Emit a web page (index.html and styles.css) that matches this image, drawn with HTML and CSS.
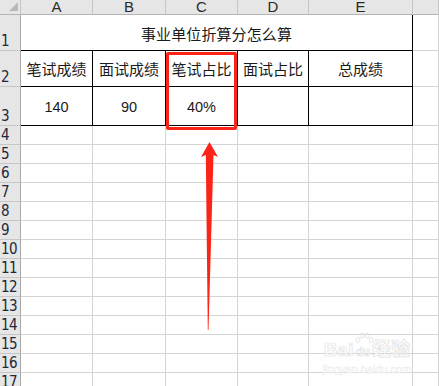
FILE: index.html
```html
<!DOCTYPE html>
<html lang="zh">
<head>
<meta charset="utf-8">
<title>事业单位折算分怎么算</title>
<link rel="stylesheet" href="styles.css">
</head>
<body>
<div class="sheet">
  <div class="corner"><span class="tri"></span></div>
  <div class="ch">A</div><div class="ch">B</div><div class="ch">C</div><div class="ch">D</div><div class="ch">E</div><div class="ch"></div>

  <div class="rh"><span>1</span></div>
  <div class="c b title">事业单位折算分怎么算</div>
  <div class="c"></div>

  <div class="rh"><span>2</span></div>
  <div class="c b txt">笔试成绩</div><div class="c b txt">面试成绩</div><div class="c b txt">笔试占比</div><div class="c b txt">面试占比</div><div class="c b txt">总成绩</div><div class="c"></div>

  <div class="rh"><span>3</span></div>
  <div class="c b num">140</div><div class="c b num">90</div><div class="c b num">40%</div><div class="c b"></div><div class="c b"></div><div class="c"></div>

  <div class="rh"><span>4</span></div><div class="c"></div><div class="c"></div><div class="c"></div><div class="c"></div><div class="c"></div><div class="c"></div>
  <div class="rh"><span>5</span></div><div class="c"></div><div class="c"></div><div class="c"></div><div class="c"></div><div class="c"></div><div class="c"></div>
  <div class="rh"><span>6</span></div><div class="c"></div><div class="c"></div><div class="c"></div><div class="c"></div><div class="c"></div><div class="c"></div>
  <div class="rh"><span>7</span></div><div class="c"></div><div class="c"></div><div class="c"></div><div class="c"></div><div class="c"></div><div class="c"></div>
  <div class="rh"><span>8</span></div><div class="c"></div><div class="c"></div><div class="c"></div><div class="c"></div><div class="c"></div><div class="c"></div>
  <div class="rh"><span>9</span></div><div class="c"></div><div class="c"></div><div class="c"></div><div class="c"></div><div class="c"></div><div class="c"></div>
  <div class="rh"><span>10</span></div><div class="c"></div><div class="c"></div><div class="c"></div><div class="c"></div><div class="c"></div><div class="c"></div>
  <div class="rh"><span>11</span></div><div class="c"></div><div class="c"></div><div class="c"></div><div class="c"></div><div class="c"></div><div class="c"></div>
  <div class="rh"><span>12</span></div><div class="c"></div><div class="c"></div><div class="c"></div><div class="c"></div><div class="c"></div><div class="c"></div>
  <div class="rh"><span>13</span></div><div class="c"></div><div class="c"></div><div class="c"></div><div class="c"></div><div class="c"></div><div class="c"></div>
  <div class="rh"><span>14</span></div><div class="c"></div><div class="c"></div><div class="c"></div><div class="c"></div><div class="c"></div><div class="c"></div>
  <div class="rh"><span>15</span></div><div class="c"></div><div class="c"></div><div class="c"></div><div class="c"></div><div class="c"></div><div class="c"></div>
  <div class="rh"><span>16</span></div><div class="c"></div><div class="c"></div><div class="c"></div><div class="c"></div><div class="c"></div><div class="c"></div>
  <div class="rh"><span>17</span></div><div class="c"></div><div class="c"></div><div class="c"></div><div class="c"></div><div class="c"></div><div class="c"></div>

  <div class="highlight"></div>
  <svg class="arrow" width="439" height="386" viewBox="0 0 439 386">
    <polygon points="209.5,142 218,157 213.5,155 208.5,330 207.8,330 205.8,155 201,157" fill="#fc2318"/>
  </svg>
  <div class="watermark">
    <svg class="wm-paw" width="20" height="14" viewBox="0 0 20 14">
      <g fill="none" stroke="#e4e4e4" stroke-width="1">
        <ellipse cx="4" cy="8" rx="2" ry="2.5"/>
        <ellipse cx="8" cy="3.5" rx="2" ry="2.6"/>
        <ellipse cx="13" cy="3.5" rx="2" ry="2.6"/>
        <ellipse cx="17" cy="8" rx="2" ry="2.5"/>
      </g>
    </svg>
    <div class="wm-main">Bai<span class="paw">du</span>经验</div>
    <div class="wm-url">jingyan.baidu.com</div>
  </div>
</div>
</body>
</html>
```
FILE: styles.css
```css
html, body {
  margin: 0;
  padding: 0;
  background: #ffffff;
  overflow: hidden;
}
.sheet {
  position: relative;
  width: 439px;
  height: 386px;
  overflow: hidden;
  display: grid;
  grid-template-columns: 21px 72px 73px 72px 71px 104px 1fr;
  grid-template-rows: 15px 36px 36px 39px repeat(14, 19px);
  font-family: "Noto Sans CJK SC", "Liberation Sans", sans-serif;
  color: #1a1a1a;
}
.sheet > div {
  box-sizing: border-box;
}
.corner {
  position: relative;
  background: #e6e6e6;
  border-right: 1px solid #c6c6c6;
  border-bottom: 1px solid #b4b4b4;
}
.tri {
  position: absolute;
  right: 2px;
  bottom: 3px;
  width: 0;
  height: 0;
  border-left: 9px solid transparent;
  border-bottom: 9px solid #b9b9b9;
}
.ch {
  background: #e6e6e6;
  border-right: 1px solid #c6c6c6;
  border-bottom: 1px solid #b4b4b4;
  font-family: "Liberation Sans", sans-serif;
  font-size: 15px;
  line-height: 14px;
  text-align: center;
  color: #2a2a2a;
}
.rh {
  background: #e6e6e6;
  border-right: 1px solid #a8a8a8;
  border-bottom: 1px solid #c6c6c6;
  display: flex;
  align-items: flex-end;
  justify-content: flex-start;
  padding-left: 1px;
  padding-bottom: 1px;
}
.rh span {
  font-family: "DejaVu Sans Condensed", "Liberation Sans", sans-serif;
  font-size: 15px;
  line-height: 16px;
  color: #22283a;
  white-space: nowrap;
  letter-spacing: -0.5px;
}
.c {
  border-right: 1px solid #d4d4d4;
  border-bottom: 1px solid #d4d4d4;
  display: flex;
  align-items: center;
  justify-content: center;
}
.c.b {
  border-right-color: #000;
  border-bottom-color: #000;
}
.title {
  grid-column: 2 / 7;
  font-size: 15px;
  letter-spacing: 0.1px;
  padding-top: 1px;
}
.txt {
  font-size: 15px;
}
.num {
  font-family: "Liberation Sans", sans-serif;
  font-size: 14.5px;
  padding-top: 1px;
}
.highlight {
  position: absolute;
  left: 166px;
  top: 52px;
  width: 71px;
  height: 78px;
  border: 3px solid #fc2318;
  border-radius: 2px;
  box-sizing: border-box;
}
.arrow {
  position: absolute;
  left: 0;
  top: 0;
}
.watermark {
  position: absolute;
  left: 322px;
  top: 331px;
  width: 90px;
  text-align: center;
  color: rgba(255, 255, 255, 0.6);
  -webkit-text-stroke: 0.7px #e2e2e2;
  font-family: "Liberation Sans", "Noto Sans CJK SC", sans-serif;
}
.wm-paw {
  position: absolute;
  left: 32px;
  top: 1px;
}
.wm-main {
  margin-top: 9px;
  font-size: 19px;
  font-weight: bold;
  line-height: 20px;
  white-space: nowrap;
}
.paw {
  font-size: 12px;
  margin: 0 2px;
}
.wm-url {
  font-size: 11px;
  line-height: 14px;
  white-space: nowrap;
  color: #ffffff;
  -webkit-text-stroke: 0.5px #ececec;
}
```
